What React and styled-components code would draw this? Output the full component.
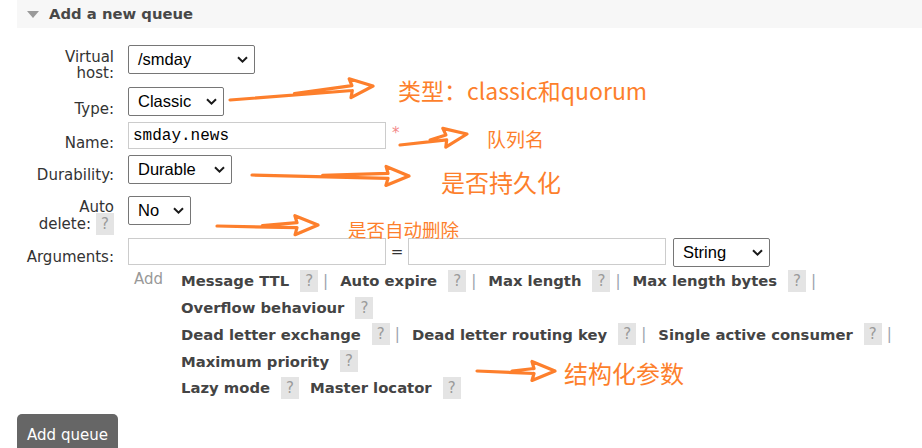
import React from "react";
import styled, { createGlobalStyle } from "styled-components";

const GlobalStyle = createGlobalStyle`
  html, body {
    margin: 0;
    padding: 0;
    background: #ffffff;
  }
  body {
    font-family: "DejaVu Sans", Verdana, sans-serif;
    color: #333333;
  }
`;

const ORANGE = "#fd7f2c";

const ARGS = [
  [["Message TTL", true], ["Auto expire", true], ["Max length", true], ["Max length bytes", true]],
  [["Overflow behaviour", false]],
  [["Dead letter exchange", true], ["Dead letter routing key", true], ["Single active consumer", true]],
  [["Maximum priority", false]],
  [["Lazy mode", false], ["Master locator", false]],
];

const ARROWS = [
  [230, 100, 373, 86],
  [400, 145, 467, 134],
  [252, 175, 409, 176],
  [217, 226, 318, 225],
  [477, 371, 555, 371],
];

const NOTES = [
  { x: 398, y: 90, size: 23, text: "类型：classic和quorum" },
  { x: 487, y: 138, size: 19, text: "队列名" },
  { x: 441, y: 182, size: 24, text: "是否持久化" },
  { x: 348, y: 229, size: 18.5, text: "是否自动删除" },
  { x: 564, y: 373, size: 24, text: "结构化参数" },
];

// hollow double-line arrow, like the ones drawn with a marker tool
function arrowPath([x1, y1, x2, y2]) {
  const dx = x2 - x1;
  const dy = y2 - y1;
  const len = Math.hypot(dx, dy);
  const ux = dx / len;
  const uy = dy / len;
  const nx = -uy;
  const ny = ux;
  const p = (a, b) =>
    `${(x1 + ux * a + nx * b).toFixed(1)},${(y1 + uy * a + ny * b).toFixed(1)}`;
  const hb = len - 21;
  return [
    `M${p(0, 0)} L${p(hb, 2.5)}`,
    `M${p(len * 0.45, 0)} L${p(hb, -2.5)}`,
    `M${p(hb, 2.5)} L${p(hb - 2, 9.5)} L${p(len, 0)} L${p(hb - 2, -9.5)} L${p(hb, -2.5)}`,
  ].join(" ");
}

function Chevron() {
  return (
    <svg width="11" height="7" viewBox="0 0 11 7">
      <path d="M1 1.2 L5.5 5.6 L10 1.2" fill="none" stroke="#1a1a1a" strokeWidth="2" />
    </svg>
  );
}

function Dropdown({ width, children }) {
  return (
    <Select $w={width}>
      <span>{children}</span>
      <Chevron />
    </Select>
  );
}

export default function App() {
  return (
    <Page>
      <GlobalStyle />
      <Section>
        <Header>
          <Triangle />
          <Title>Add a new queue</Title>
        </Header>

        <Form>
          <Row $h={42}>
            <Label $pt={4} $lh={16}>
              Virtual
              <br />
              host:
            </Label>
            <Field>
              <Dropdown width={127}>/smday</Dropdown>
            </Field>
          </Row>

          <Row $h={35}>
            <Label $pt={15}>Type:</Label>
            <Field>
              <Dropdown width={96}>Classic</Dropdown>
            </Field>
          </Row>

          <Row $h={33}>
            <Label $pt={14}>Name:</Label>
            <Field>
              <TextInput readOnly defaultValue="smday.news" />
              <Mandatory>*</Mandatory>
            </Field>
          </Row>

          <Row $h={41}>
            <Label $pt={13}>Durability:</Label>
            <Field>
              <Dropdown width={104}>Durable</Dropdown>
            </Field>
          </Row>

          <Row $h={42}>
            <Label $pt={4}>
              <LabelLine>Auto</LabelLine>
              <LabelLine $tight>
                delete:
                <Help>?</Help>
              </LabelLine>
            </Label>
            <Field>
              <Dropdown width={63}>No</Dropdown>
            </Field>
          </Row>

          <Row $h={29}>
            <Label $pt={12}>Arguments:</Label>
            <Field>
              <TextInput readOnly defaultValue="" />
              <Equals>=</Equals>
              <TextInput readOnly defaultValue="" />
              <TypeSelect>
                <Dropdown width={97}>String</Dropdown>
              </TypeSelect>
            </Field>
          </Row>
        </Form>

        <ArgsBlock>
          <AddLink>Add</AddLink>
          <LinkList>
            {ARGS.map((line, i) => (
              <LinkLine key={i}>
                {line.map(([name, pipe]) => (
                  <React.Fragment key={name}>
                    <ArgLink>{name}</ArgLink>
                    <Help $after={pipe ? 0 : 11}>?</Help>
                    {pipe && <Pipe>|</Pipe>}
                  </React.Fragment>
                ))}
              </LinkLine>
            ))}
          </LinkList>
        </ArgsBlock>

        <Button>Add queue</Button>
      </Section>

      <Marks width="922" height="448" viewBox="0 0 922 448">
        {ARROWS.map((a, i) => (
          <path
            key={i}
            d={arrowPath(a)}
            fill="none"
            stroke={ORANGE}
            strokeWidth="3.2"
            strokeLinecap="round"
            strokeLinejoin="round"
          />
        ))}
      </Marks>
      {NOTES.map((n) => (
        <Note key={n.text} $x={n.x} $y={n.y} $size={n.size}>
          {n.text}
        </Note>
      ))}
    </Page>
  );
}

const Page = styled.div`
  position: relative;
  width: 922px;
  height: 448px;
  overflow: hidden;
`;

const Section = styled.div`
  padding-left: 17px;
  display: flex;
  flex-direction: column;
  align-items: flex-start;
`;

const Header = styled.div`
  align-self: stretch;
  height: 28px;
  background: #f7f7f7;
  display: flex;
  align-items: center;
  padding-left: 10px;
`;

const Triangle = styled.div`
  width: 0;
  height: 0;
  border-left: 6px solid transparent;
  border-right: 6px solid transparent;
  border-top: 7px solid #9a9a9a;
  margin-top: 1px;
`;

const Title = styled.h2`
  margin: -2px 0 0 10px;
  font-size: 14.8px;
  font-weight: bold;
  color: #484848;
`;

const Form = styled.div`
  display: flex;
  flex-direction: column;
  margin-top: 17px;
`;

const Row = styled.div`
  display: flex;
  align-items: flex-start;
  height: ${(p) => p.$h}px;
`;

const Label = styled.div`
  box-sizing: border-box;
  width: 97px;
  padding-top: ${(p) => p.$pt}px;
  text-align: right;
  font-size: 15px;
  line-height: ${(p) => p.$lh || 14}px;
  color: #333333;
`;

const LabelLine = styled.div`
  display: flex;
  justify-content: flex-end;
  align-items: center;
  margin-top: ${(p) => (p.$tight ? -1 : 0)}px;
`;

const Field = styled.div`
  display: flex;
  align-items: flex-start;
  margin-left: 14px;
`;

const Select = styled.div`
  box-sizing: border-box;
  width: ${(p) => p.$w}px;
  height: 29px;
  border: 1px solid #767676;
  border-radius: 2px;
  background: #ffffff;
  display: flex;
  align-items: center;
  justify-content: space-between;
  padding: 0 6px 0 9px;
  font-family: "Liberation Sans", Arial, sans-serif;
  font-size: 16.5px;
  color: #000000;
`;

const TextInput = styled.input`
  box-sizing: border-box;
  width: 258px;
  height: 27px;
  margin: 0;
  border: 1px solid #cccccc;
  border-radius: 0;
  padding: 0 4px;
  font-family: "Liberation Mono", "Courier New", monospace;
  font-size: 16px;
  color: #000000;
  background: #ffffff;
  outline: none;
`;

const Mandatory = styled.span`
  margin-left: 6px;
  padding-top: 2px;
  font-size: 15px;
  color: #f38888;
`;

const Equals = styled.span`
  width: 22px;
  text-align: center;
  padding-top: 5px;
  font-size: 15px;
  color: #333333;
`;

const TypeSelect = styled.div`
  margin-left: 7px;
`;

const ArgsBlock = styled.div`
  display: flex;
  align-items: flex-start;
  margin-top: 0.6px;
  margin-left: 111px;
`;

const AddLink = styled.span`
  width: 47px;
  padding-left: 6px;
  padding-top: 2px;
  font-size: 15px;
  color: #999999;
`;

const LinkList = styled.div`
  display: flex;
  flex-direction: column;
`;

const LinkLine = styled.div`
  display: flex;
  align-items: center;
  height: 26.75px;
`;

const ArgLink = styled.span`
  font-size: 14.8px;
  font-weight: bold;
  color: #444444;
  margin-right: 11px;
  white-space: nowrap;
`;

const Help = styled.span`
  display: inline-flex;
  align-items: center;
  justify-content: center;
  width: 18px;
  height: 22px;
  background: #e4e4e4;
  color: #9a9a9a;
  font-size: 15px;
  font-weight: normal;
  line-height: 22px;
  margin-left: 5px;
  margin-right: ${(p) => p.$after || 0}px;
  ${LinkLine} & {
    margin-left: 0;
  }
`;

const Pipe = styled.span`
  font-size: 15px;
  color: #9aa3ad;
  margin: 0 12px 0 5px;
`;

const Button = styled.div`
  margin-top: 13px;
  width: 101px;
  height: 40px;
  box-sizing: border-box;
  padding-top: 12px;
  text-align: center;
  background: #666666;
  color: #ffffff;
  font-size: 15px;
  border-radius: 5px 5px 0 0;
`;

const Marks = styled.svg`
  position: absolute;
  left: 0;
  top: 0;
  pointer-events: none;
`;

const Note = styled.div`
  position: absolute;
  left: ${(p) => p.$x}px;
  top: ${(p) => p.$y - p.$size / 2}px;
  font-family: "Noto Sans CJK SC", "Microsoft YaHei", sans-serif;
  font-size: ${(p) => p.$size}px;
  line-height: 1;
  color: ${ORANGE};
  white-space: nowrap;
`;
